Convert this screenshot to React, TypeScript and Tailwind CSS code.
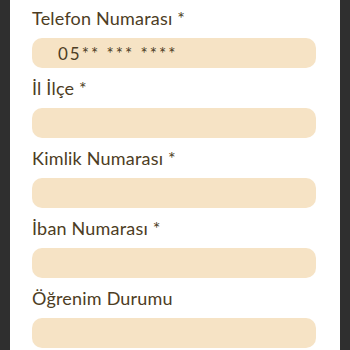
const fields = [
  { label: "Telefon Numarası *", placeholder: "05** *** ****" },
  { label: "İl İlçe *", placeholder: "" },
  { label: "Kimlik Numarası *", placeholder: "" },
  { label: "İban Numarası *", placeholder: "" },
  { label: "Öğrenim Durumu", placeholder: "" },
];

export default function App() {
  return (
    <div className="flex h-[350px] w-[350px] overflow-hidden bg-[#2f2f2f]">
      <div className="ml-[10px] w-[330px] bg-white pl-[22px] pr-[24px] pt-[4px] font-['Lato',sans-serif] text-[#4d3d24]">
        {fields.map((f) => (
          <div key={f.label} className="flex flex-col">
            <label className="h-[28px] text-[18px] leading-[28px] tracking-[0.2px]">{f.label}</label>
            <input
              className="mt-[6px] mb-[6px] h-[30px] w-full rounded-[10px] bg-[#f6e3c5] pl-[26px] text-[17px] tracking-[2px] text-[#4d3d24] outline-none placeholder:text-[#4d3d24]"
              placeholder={f.placeholder}
            />
          </div>
        ))}
      </div>
    </div>
  );
}
